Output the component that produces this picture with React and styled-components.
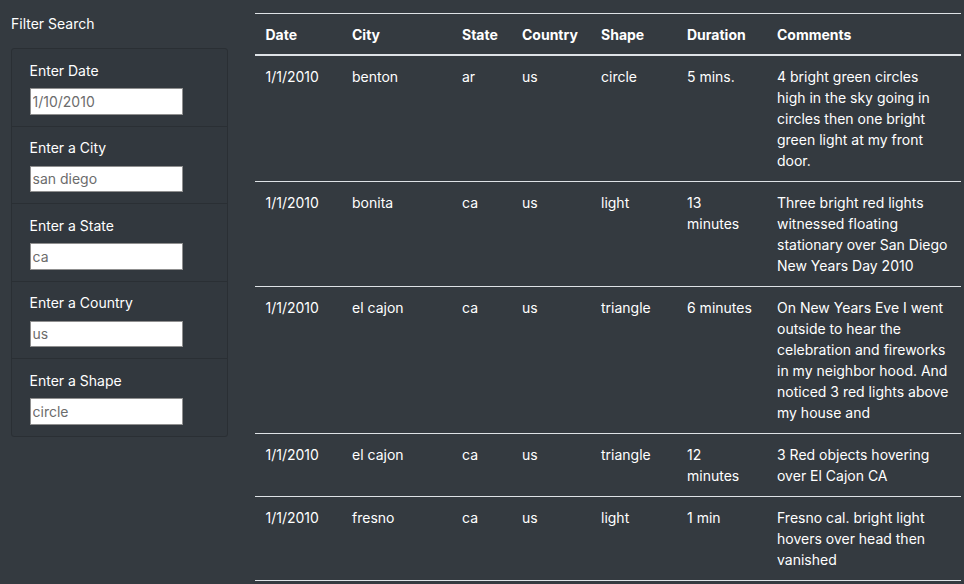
import React from "react";
import styled, { createGlobalStyle } from "styled-components";

const Global = createGlobalStyle`
  html, body { margin: 0; padding: 0; background: #343a40; }
  body {
    font-family: Inter, "Liberation Sans", Arial, sans-serif;
    color: #fff;
    font-size: 14px;
    line-height: 21px;
  }
  * { box-sizing: border-box; }
`;

const Page = styled.div`
  display: flex;
  align-items: flex-start;
  padding: 13px 3px 0 11px;
  min-height: 584px;
`;

const Sidebar = styled.aside`
  width: 217px;
  flex: none;
`;

const SideTitle = styled.div`
  font-size: 14px;
  line-height: 21px;
  margin-bottom: 14px;
`;

const Card = styled.div`
  border: 1px solid rgba(0, 0, 0, 0.15);
  border-radius: 3.5px;
  background: #32383e;
`;

const Item = styled.div`
  padding: 10.5px 17.5px 11px;
  border-top: ${(p) => (p.$first ? "none" : "1px solid rgba(0, 0, 0, 0.15)")};
`;

const Label = styled.label`
  display: block;
  font-size: 14px;
  line-height: 21px;
  margin-bottom: 7.5px;
  color: #fff;
`;

const Input = styled.input`
  display: block;
  width: 153px;
  height: 26.5px;
  padding: 1px 2px;
  font-family: Inter, "Liberation Sans", Arial, sans-serif;
  font-size: 14px;
  border: 1px solid #8f8f8f;
  border-radius: 0;
  background: #fff;
  color: #495057;
  outline: none;
  &::placeholder { color: #6c6c6c; opacity: 1; }
`;

const Main = styled.main`
  margin-left: 27px;
  flex: 1;
`;

const Table = styled.table`
  width: 706px;
  border-collapse: collapse;
  table-layout: fixed;
  color: #fff;
  font-size: 14px;
  line-height: 21px;
`;

const Th = styled.th`
  text-align: left;
  font-weight: 700;
  padding: 10px 10.5px 9px;
  border-top: 1px solid #dee2e6;
  border-bottom: 2px solid #dee2e6;
  vertical-align: bottom;
  width: ${(p) => p.$w}px;
`;

const Td = styled.td`
  padding: 10px 10.5px 10px;
  border-bottom: 1px solid #dee2e6;
  vertical-align: top;
`;

const filters = [
  { label: "Enter Date", ph: "1/10/2010" },
  { label: "Enter a City", ph: "san diego" },
  { label: "Enter a State", ph: "ca" },
  { label: "Enter a Country", ph: "us" },
  { label: "Enter a Shape", ph: "circle" },
];

const cols = [
  ["Date", 86.5],
  ["City", 110],
  ["State", 60],
  ["Country", 79],
  ["Shape", 86],
  ["Duration", 90],
  ["Comments", 194.5],
];

const rows = [
  ["1/1/2010", "benton", "ar", "us", "circle", "5 mins.", "4 bright green circles high in the sky going in circles then one bright green light at my front door."],
  ["1/1/2010", "bonita", "ca", "us", "light", "13 minutes", "Three bright red lights witnessed floating stationary over San Diego New Years Day 2010"],
  ["1/1/2010", "el cajon", "ca", "us", "triangle", "6 minutes", "On New Years Eve I went outside to hear the celebration and fireworks in my neighbor hood. And noticed 3 red lights above my house and"],
  ["1/1/2010", "el cajon", "ca", "us", "triangle", "12 minutes", "3 Red objects hovering over El Cajon CA"],
  ["1/1/2010", "fresno", "ca", "us", "light", "1 min", "Fresno cal. bright light hovers over head then vanished"],
];

export default function App() {
  return (
    <>
      <Global />
      <Page>
        <Sidebar>
          <SideTitle>Filter Search</SideTitle>
          <Card>
            {filters.map((f, i) => (
              <Item key={f.label} $first={i === 0}>
                <Label>{f.label}</Label>
                <Input placeholder={f.ph} />
              </Item>
            ))}
          </Card>
        </Sidebar>
        <Main>
          <Table>
            <thead>
              <tr>
                {cols.map(([c, w]) => (
                  <Th key={c} $w={w}>{c}</Th>
                ))}
              </tr>
            </thead>
            <tbody>
              {rows.map((r, i) => (
                <tr key={i}>
                  {r.map((c, j) => (
                    <Td key={j}>{c}</Td>
                  ))}
                </tr>
              ))}
            </tbody>
          </Table>
        </Main>
      </Page>
    </>
  );
}
